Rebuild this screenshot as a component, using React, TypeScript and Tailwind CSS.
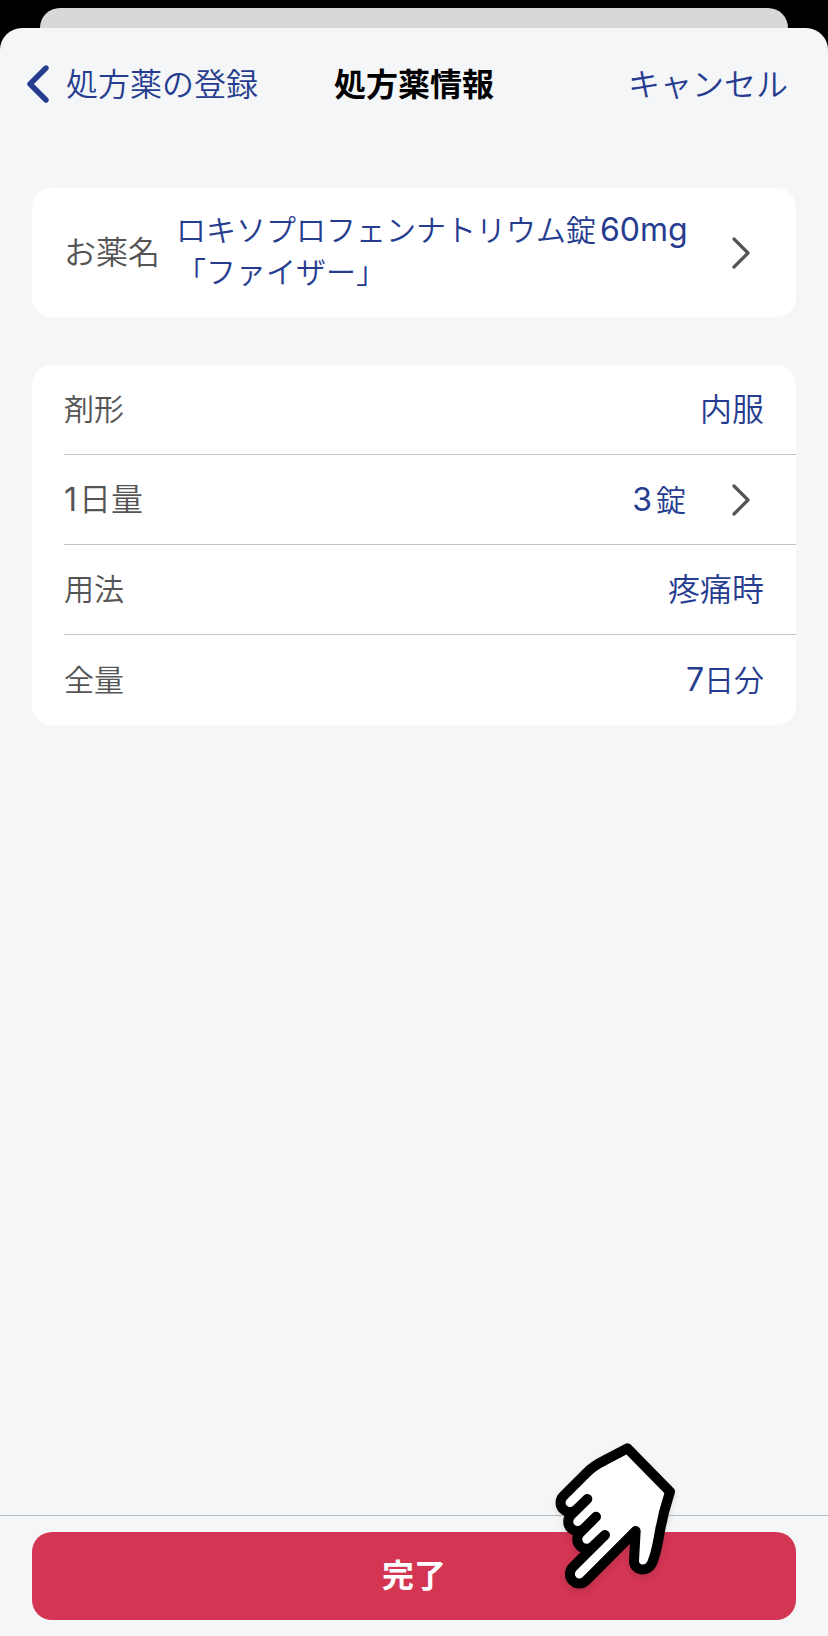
import type { ReactNode } from 'react'

function Chevron() {
    return (
        <svg className="w-5 h-9 text-[#555555] shrink-0" viewBox="0 0 20 36" fill="none" aria-hidden="true">
            <path d="M4 4 L18 18 L4 32" stroke="currentColor" strokeWidth="3.2" strokeLinecap="round" strokeLinejoin="round" />
        </svg>
    )
}

function HandPointer() {
    return (
        <svg
            className="absolute right-[138px] bottom-9 w-[150px] h-[170px] drop-shadow-md pointer-events-none"
            viewBox="0 0 450 510"
            aria-hidden="true"
        >
            <path
                d="M262 55 L390 185 C371 243 362 285 355 330 C350 357 344 382 335 402 C322 427 281 423 282 392 L287 303 L138 452 A28 28 0 0 1 98 412 L195 315 L160 348 A28 28 0 0 1 120 308 L168 260 L133 295 A28 28 0 0 1 93 255 L142 207 L110 238 A28 28 0 0 1 70 198 L140 128 Q160 108 190 93 Z"
                fill="#ffffff"
                stroke="#000000"
                strokeWidth="30"
                strokeLinecap="round"
                strokeLinejoin="round"
            />
        </svg>
    )
}

function Row({ label, children }: { label: ReactNode; children: ReactNode }) {
    return (
        <div className="flex items-center justify-between h-[90px] ml-8 pr-8 border-b border-[#c4c4c6] last:border-b-0">
            <dt className="text-[#555555]">{label}</dt>
            <dd className="text-[#263c8f]">{children}</dd>
        </div>
    )
}

export default function App() {
    return (
        <div className="min-h-screen flex flex-col bg-black pt-2 font-[350] text-[30px] font-['Inter','Noto_Sans_CJK_JP',sans-serif]">
            {/* Sheet behind */}
            <div className="h-5 mx-10 bg-[#d7d8da] rounded-t-[20px]" />

            <div className="relative flex-1 flex flex-col bg-[#f4f6f8] rounded-t-[22px]">
                {/* Header */}
                <header className="grid grid-cols-[1fr_auto_1fr] items-center h-[114px] px-6 text-[32px] text-[#263c8f]">
                    <button type="button" className="flex items-center gap-4 justify-self-start">
                        <svg className="w-[26px] h-10" viewBox="0 0 26 40" fill="none" aria-hidden="true">
                            <path d="M22 3 L6 19 L22 35" stroke="currentColor" strokeWidth="5.4" strokeLinecap="round" strokeLinejoin="round" />
                        </svg>
                        処方薬の登録
                    </button>
                    <h1 className="font-bold text-black">処方薬情報</h1>
                    <button type="button" className="justify-self-end mr-4">キャンセル</button>
                </header>

                <main className="flex-1 px-8 pt-[46px]">
                    {/* Medicine name */}
                    <button type="button" className="w-full h-[129px] flex items-center bg-white rounded-[20px] pl-8 pr-[46px] text-left">
                        <span className="shrink-0 text-[32px] text-[#555555]">お薬名</span>
                        <span className="flex-1 ml-4 pb-1 leading-[42px] text-[#263c8f]">
                            ロキソプロフェンナトリウム錠
                            <span className="ml-1 text-[32px] font-normal">60mg</span>
                            <br />
                            「ファイザー」
                        </span>
                        <Chevron />
                    </button>

                    {/* Details */}
                    <dl className="mt-12 bg-white rounded-[20px]">
                        <Row label="剤形">
                            <span className="text-[32px]">内服</span>
                        </Row>
                        <Row
                            label={
                                <span className="text-[32px]">
                                    <span className="mr-0.5 font-normal">1</span>日量
                                </span>
                            }
                        >
                            <button type="button" className="flex items-center gap-11 pr-3.5">
                                <span>
                                    <span className="mr-1 text-[32px] font-normal">3</span>錠
                                </span>
                                <Chevron />
                            </button>
                        </Row>
                        <Row label="用法">
                            <span className="text-[32px]">疼痛時</span>
                        </Row>
                        <Row label="全量">
                            <span className="text-[32px] font-normal">7</span>日分
                        </Row>
                    </dl>
                </main>

                {/* Footer */}
                <footer className="border-t border-[#b9bcbe] px-8 py-4">
                    <button type="button" className="w-full h-[88px] rounded-[20px] bg-[#d33553] text-white text-[32px] font-bold">
                        完了
                    </button>
                </footer>

                <HandPointer />
            </div>
        </div>
    )
}
